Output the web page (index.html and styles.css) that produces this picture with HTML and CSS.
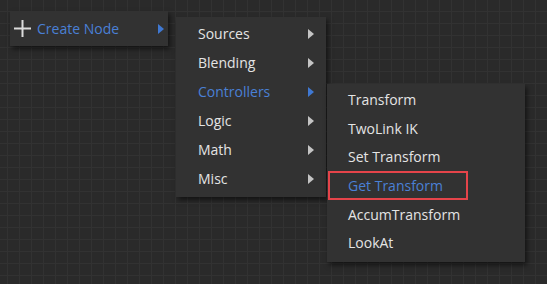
FILE: index.html
```html
<!DOCTYPE html>
<html lang="en">
<head>
  <meta charset="UTF-8">
  <title>Create Node</title>
  <link rel="stylesheet" href="styles.css">
</head>
<body>

  <div class="canvas">

    <div class="menu menu-root">
      <div class="item active">
        <svg class="plus" width="17" height="17" viewBox="0 0 17 17">
          <rect x="7.5" y="0" width="2" height="17" fill="#dcdcdc"/>
          <rect x="0" y="7.5" width="17" height="2" fill="#dcdcdc"/>
        </svg>
        <span class="label">Create Node</span>
        <span class="arrow"></span>
      </div>
    </div>

    <div class="menu menu-cats">
      <div class="item"><span class="label">Sources</span><span class="arrow"></span></div>
      <div class="item"><span class="label">Blending</span><span class="arrow"></span></div>
      <div class="item active"><span class="label">Controllers</span><span class="arrow"></span></div>
      <div class="item"><span class="label">Logic</span><span class="arrow"></span></div>
      <div class="item"><span class="label">Math</span><span class="arrow"></span></div>
      <div class="item"><span class="label">Misc</span><span class="arrow"></span></div>
    </div>

    <div class="menu menu-nodes">
      <div class="item"><span class="label">Transform</span></div>
      <div class="item"><span class="label">TwoLink IK</span></div>
      <div class="item"><span class="label">Set Transform</span></div>
      <div class="item active marked"><span class="label">Get Transform</span></div>
      <div class="item"><span class="label">AccumTransform</span></div>
      <div class="item"><span class="label">LookAt</span></div>
    </div>

  </div>

</body>
</html>
```

FILE: styles.css
```css
body {
  margin: 0;
  font-family: "Open Sans", Arial, sans-serif;
  font-size: 14px;
  color: #e4e4e4;
  background: #2a2a2a;
}

.canvas {
  position: relative;
  width: 547px;
  height: 284px;
  overflow: hidden;
  background-color: #2a2a2a;
  background-image:
    linear-gradient(to right, #323232 1px, transparent 1px),
    linear-gradient(to bottom, #323232 1px, transparent 1px);
  background-size: 12px 12px;
  background-position: 7px 11px;
}

.menu {
  position: absolute;
  background: #323232;
  box-shadow: 2px 3px 5px rgba(0, 0, 0, 0.55);
}

.menu-root {
  left: 10px;
  top: 11px;
  width: 158px;
  height: 35px;
}

.menu-cats {
  left: 176px;
  top: 17px;
  width: 150px;
  padding: 2px 0 4px;
}

.menu-nodes {
  left: 327px;
  top: 84px;
  width: 198px;
  padding: 1px 0 5px;
}

.item {
  display: flex;
  align-items: center;
  height: 29px;
  padding-left: 22px;
  padding-right: 12px;
}

.menu-root .item {
  height: 35px;
  padding-left: 4px;
  padding-right: 4px;
}

.menu-nodes .item {
  height: 28.7px;
  padding-left: 21px;
  box-sizing: border-box;
}

.plus {
  margin-right: 6px;
  margin-top: 0;
}

.label {
  flex: 1;
  white-space: nowrap;
}

.arrow {
  width: 0;
  height: 0;
  border-top: 5px solid transparent;
  border-bottom: 5px solid transparent;
  border-left: 6px solid #c4c4c4;
}

.active .label {
  color: #4a80d6;
}

.active .arrow {
  border-left-color: #3f78d2;
}

.marked {
  position: relative;
}

.marked::after {
  content: "";
  position: absolute;
  left: 1px;
  top: 0;
  width: 140px;
  height: 29px;
  border: 2.5px solid #e5444a;
  box-sizing: border-box;
}
```
